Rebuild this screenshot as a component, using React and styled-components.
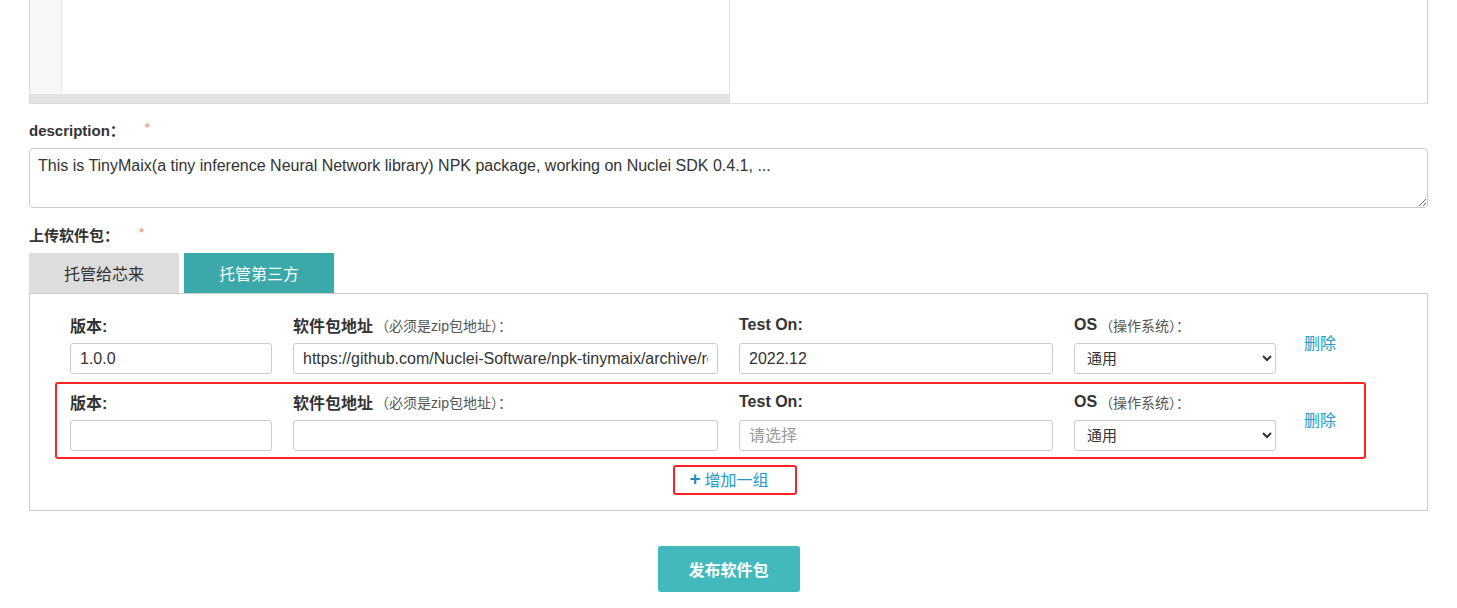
import React from 'react';
import styled, { createGlobalStyle } from 'styled-components';

const GlobalStyle = createGlobalStyle`
    body {
        margin: 0;
        background: #fff;
        font-family: "Liberation Sans", Arial, "Noto Sans CJK SC", sans-serif;
        color: #333;
    }
    * { box-sizing: border-box; }
`;

const Page = styled.main`
    width: 1399px;
    margin-left: 29px;
    display: flex;
    flex-direction: column;
`;

const Editor = styled.div`
    display: flex;
    height: 104px;
    border-bottom: 1px solid #ddd;
`;

const CodePane = styled.div`
    width: 700px;
    display: flex;
    flex-direction: column;
    border-left: 1px solid #ddd;
    .body {
        flex: 1;
        display: flex;
    }
    .gutter {
        width: 32px;
        background: #f7f7f7;
        border-right: 1px solid #e8e8e8;
    }
    .scroll {
        height: 9px;
        background: #e3e3e3;
    }
`;

const PreviewPane = styled.div`
    flex: 1;
    border-left: 1px solid #ddd;
    border-right: 1px solid #ccc;
`;

const FieldLabel = styled.div`
    display: flex;
    align-items: center;
    font-size: 15px;
    font-weight: 700;
    color: #333;
    height: 20px;
    margin-top: ${(p) => p.$top}px;
    .star {
        color: #f0845a;
        font-weight: 400;
        font-size: 13px;
        margin-left: ${(p) => p.$gap}px;
        margin-top: -3px;
    }
`;

const Description = styled.textarea`
    margin-top: 9px;
    height: 60px;
    width: 100%;
    border: 1px solid #ccc;
    border-radius: 4px;
    padding: 7px 8px;
    font-family: inherit;
    font-size: 16px;
    line-height: 19px;
    color: #333;
    resize: vertical;
`;

const Tabs = styled.div`
    display: flex;
    gap: 5px;
    margin-top: 9px;
`;

const Tab = styled.div`
    width: 150px;
    height: 40px;
    display: flex;
    align-items: center;
    justify-content: center;
    font-size: 16px;
    background: ${(p) => (p.$active ? '#3ba8a9' : '#dddddd')};
    color: ${(p) => (p.$active ? '#fff' : '#333')};
`;

const Panel = styled.section`
    border: 1px solid #ccc;
    padding: 11px 0 15px 25px;
    display: flex;
    flex-direction: column;
`;

const Row = styled.div`
    width: 1311px;
    height: 77px;
    display: flex;
    gap: 21px;
    padding: 8px 13px 6px 13px;
    border: 2px solid ${(p) => (p.$marked ? '#ff2424' : 'transparent')};
    border-radius: 3px;
`;

const Field = styled.div`
    width: ${(p) => p.$w}px;
    display: flex;
    flex-direction: column;
    gap: 8px;
`;

const Label = styled.div`
    height: 20px;
    display: flex;
    align-items: center;
    font-size: 16px;
    font-weight: 700;
    color: #333;
    small {
        font-size: 14px;
        font-weight: 400;
        color: #555;
        margin-left: 2px;
    }
`;

const Input = styled.input`
    height: 31px;
    width: 100%;
    border: 1px solid #ccc;
    border-radius: 3px;
    padding: 0 9px;
    font-family: inherit;
    font-size: 16px;
    color: #333;
    &::placeholder {
        color: #999;
    }
`;

const Select = styled.select`
    height: 31px;
    width: 100%;
    border: 1px solid #ccc;
    border-radius: 3px;
    padding: 0 8px;
    font-family: inherit;
    font-size: 15px;
    color: #333;
    background: #fff;
`;

const Remove = styled.a`
    margin-left: 7px;
    padding-top: 19px;
    font-size: 16px;
    color: #239bc9;
    line-height: 20px;
    cursor: pointer;
`;

const AddWrap = styled.div`
    display: flex;
    justify-content: center;
    margin-top: 6px;
    padding-right: 13px;
`;

const AddButton = styled.a`
    width: 124px;
    height: 30px;
    display: flex;
    align-items: center;
    gap: 4px;
    padding: 0 0 3px 15px;
    border: 2px solid #ff2424;
    border-radius: 3px;
    font-size: 16px;
    color: #239bc9;
    cursor: pointer;
    .plus {
        font-weight: 700;
        font-size: 19px;
        line-height: 1;
        color: #1f8fb8;
    }
`;

const Submit = styled.button`
    align-self: center;
    margin-top: 35px;
    width: 142px;
    height: 46px;
    border: none;
    border-radius: 3px;
    background: #42b9bd;
    color: #fff;
    font-family: inherit;
    font-size: 16px;
    font-weight: 700;
`;

const rows = [
    { version: '1.0.0', url: 'https://github.com/Nuclei-Software/npk-tinymaix/archive/refs/tags/v1.0.0.zip', test: '2022.12' },
    { version: '', url: '', test: '', marked: true },
];

export default function App() {
    return (
        <>
            <GlobalStyle />
            <Page>
                <Editor>
                    <CodePane>
                        <div className="body">
                            <div className="gutter" />
                        </div>
                        <div className="scroll" />
                    </CodePane>
                    <PreviewPane />
                </Editor>

                <FieldLabel $top={15} $gap={20}>
                    description：<span className="star">*</span>
                </FieldLabel>
                <Description
                    defaultValue="This is TinyMaix(a tiny inference Neural Network library) NPK package, working on Nuclei SDK 0.4.1, ..."
                />

                <FieldLabel $top={16} $gap={20}>
                    上传软件包：<span className="star">*</span>
                </FieldLabel>
                <Tabs>
                    <Tab>托管给芯来</Tab>
                    <Tab $active>托管第三方</Tab>
                </Tabs>

                <Panel>
                    {rows.map((r, i) => (
                        <Row key={i} $marked={r.marked}>
                            <Field $w={202}>
                                <Label>版本:</Label>
                                <Input defaultValue={r.version} />
                            </Field>
                            <Field $w={425}>
                                <Label>
                                    软件包地址<small>（必须是zip包地址）：</small>
                                </Label>
                                <Input defaultValue={r.url} />
                            </Field>
                            <Field $w={314}>
                                <Label>Test On:</Label>
                                <Input defaultValue={r.test} placeholder="请选择" />
                            </Field>
                            <Field $w={202}>
                                <Label>
                                    OS<small>（操作系统）：</small>
                                </Label>
                                <Select defaultValue="common">
                                    <option value="common">通用</option>
                                </Select>
                            </Field>
                            <Remove>删除</Remove>
                        </Row>
                    ))}
                    <AddWrap>
                        <AddButton>
                            <span className="plus">+</span>增加一组
                        </AddButton>
                    </AddWrap>
                </Panel>

                <Submit>发布软件包</Submit>
            </Page>
        </>
    );
}
